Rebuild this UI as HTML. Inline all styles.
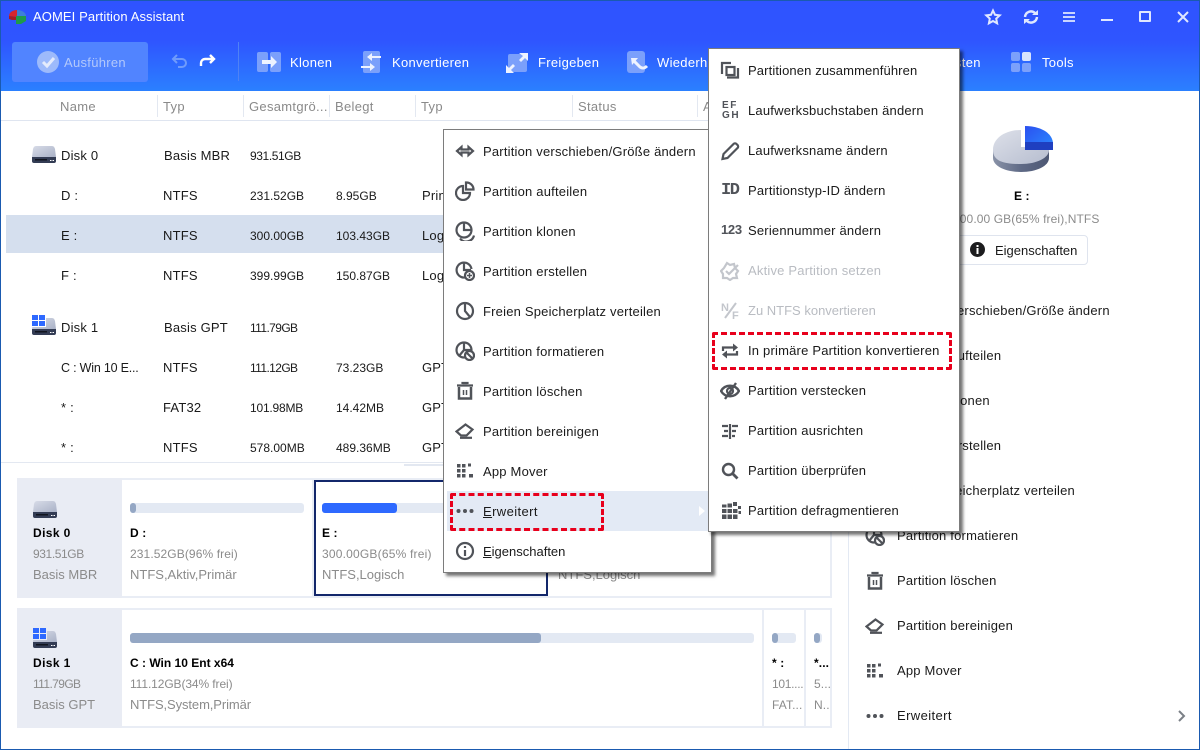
<!DOCTYPE html>
<html><head><meta charset="utf-8"><style>
*{box-sizing:border-box}
html,body{margin:0;padding:0}
body{width:1200px;height:750px;position:relative;overflow:hidden;background:#fff;font-family:"Liberation Sans",sans-serif;font-size:13px;color:#1a1a1a}
.t{position:absolute;white-space:nowrap;line-height:16px;letter-spacing:.2px}
.a{position:absolute}
.w{color:#fff;letter-spacing:.3px}
.g{color:#8b8b8b;letter-spacing:0}
.h{color:#8a8a8a;letter-spacing:.3px}
.b{font-weight:bold;color:#000;font-size:12px;letter-spacing:.1px}
.d{color:#b9bcc2}
.n{font-size:12px;letter-spacing:0}
.g.n{letter-spacing:.1px}
.menu{position:absolute;background:#fff;border:1px solid #7c7c7c;box-shadow:3px 3px 3px rgba(0,0,0,.55)}
svg{position:absolute;overflow:visible}
.i{width:20px;height:20px;fill:none;stroke:#505359;stroke-width:2.2}
.dash{position:absolute;border:3px dashed #e8001c;border-radius:2px}
u{text-decoration:underline}
</style></head><body>
<svg width="0" height="0" style="position:absolute">
<defs>
<linearGradient id="dg" x1="0" y1="0" x2="1" y2="1"><stop offset="0" stop-color="#d8dce8"/><stop offset="1" stop-color="#a9b1c6"/></linearGradient>
<linearGradient id="pg" x1="0" y1="0" x2="1" y2="1"><stop offset="0" stop-color="#dde0e9"/><stop offset="1" stop-color="#b6bdcf"/></linearGradient>
<linearGradient id="ps" x1="0" y1="0" x2="1" y2="0"><stop offset="0" stop-color="#8a93a8"/><stop offset=".5" stop-color="#5f6a86"/><stop offset="1" stop-color="#4d5773"/></linearGradient>
<linearGradient id="pb" x1="0" y1="0" x2="1" y2="1"><stop offset="0" stop-color="#2b50f0"/><stop offset="1" stop-color="#2b8bff"/></linearGradient>
<symbol id="disk" viewBox="0 0 24 17"><path d="M4 0h16c1.500 0 2.500 1 3 3l1 8H0l1-8c.5-2 1.500-3 3-3z" fill="url(#dg)"/><path d="M0 11h24v4a2 2 0 0 1-2 2H2a2 2 0 0 1-2-2z" fill="#333c54"/><path d="M3 13h12v1.500H3z" fill="#11151f"/><path d="M18 14h1.500v1H18zM20.500 14H22v1h-1.500z" fill="#fff"/></symbol>
<symbol id="win" viewBox="0 0 13 11"><path d="M0 0h6v5H0zM7 0h6v5H7zM0 6h6v5H0zM7 6h6v5H7z" fill="#2e69ff"/></symbol>
<symbol id="move" viewBox="0 0 20 20"><path d="M2 10l4.500-4v2.500h7V6l4.500 4-4.500 4v-2.500h-7V14z"/></symbol>
<symbol id="split" viewBox="0 0 20 20"><path d="M8 5a7 7 0 1 0 7 7H8z"/><path d="M11 1.500v7h7.500a7 7 0 0 0-7-7z"/></symbol>
<symbol id="clone" viewBox="0 0 20 20"><circle cx="9" cy="9" r="7.500"/><path d="M9 2v7h7.500"/><path d="M5 17.500a8 8 0 0 0 14-3"/></symbol>
<symbol id="create" viewBox="0 0 20 20"><path d="M10 16.500A7.500 7.500 0 1 1 16.500 8"/><path d="M9 1.500V9h7"/><circle cx="14.500" cy="14.500" r="4.500"/><path d="M12 14.500h5M14.500 12v5" stroke-width="1.500"/></symbol>
<symbol id="clock" viewBox="0 0 20 20"><circle cx="10" cy="10" r="8"/><path d="M10 2v8l5 6"/></symbol>
<symbol id="format" viewBox="0 0 20 20"><circle cx="9" cy="9" r="7.500"/><path d="M9 1.500V9h7.500M9 9l-5 6"/><circle cx="14.500" cy="14.500" r="4.500" fill="#fff"/><path d="M11.500 11.500l6 6"/></symbol>
<symbol id="trash" viewBox="0 0 20 20"><path d="M2 4.500h16M7.500 3V2h5v1"/><path d="M4 6v11.500h12V6" stroke-width="2.500"/><path d="M8.500 9v5M11.500 9v5" stroke-width="1.500"/></symbol>
<symbol id="erase" viewBox="0 0 20 20"><path d="M1.500 10.500L10.500 3.500l7 5-6 6H6z"/><path d="M5 16.800h12"/></symbol>
<symbol id="app" viewBox="0 0 20 20"><path stroke="none" fill="#505359" d="M1 3h3.500v3.500H1zM6 3h3.500v3.500H6zM12 2.500h3v3h-3zM1 8h3.500v3.500H1zM6 8h3.500v3.500H6zM1 13h3.500v3.500H1zM6 13h3.500v3.500H6zM13 13h4v3.500h-4z"/></symbol>
<symbol id="dots" viewBox="0 0 20 20"><g stroke="none" fill="#505359"><circle cx="3.500" cy="10" r="2"/><circle cx="10" cy="10" r="2"/><circle cx="16.500" cy="10" r="2"/></g></symbol>
<symbol id="info" viewBox="0 0 20 20"><circle cx="10" cy="10" r="8"/><path d="M10 9v6" stroke-width="2.200"/><path d="M10 5v2" stroke-width="2.200"/></symbol>
<symbol id="merge" viewBox="0 0 20 20"><path d="M11 3H2v11"/><rect x="6.500" y="7" width="8" height="8"/><path d="M18 8v9.500H7"/></symbol>
<symbol id="pen" viewBox="0 0 20 20"><path d="M2.500 18l1-5L13.500 3a2 2 0 0 1 3 0l1 1a2 2 0 0 1 0 3l-10 10z"/></symbol>
<symbol id="activ" viewBox="0 0 20 20"><path d="M7 2l3 2 4-1 1 4 3 3-2 3 1 4-4 0-3 2-3-2-4 0 0-4-2-3 3-3z" stroke="#c3c6cc"/><path d="M6 10l3 3 9-9" stroke="#c3c6cc"/></symbol>
<symbol id="conv" viewBox="0 0 20 20"><path d="M3 10V6.500h10M17 10v3.500H7"/><path d="M13 2.500l5 4-5 4zM7 9.500l-5 4 5 4z" fill="#505359" stroke="none"/></symbol>
<symbol id="eye" viewBox="0 0 20 20"><path d="M1 10c4-7 14-7 18 0-4 7-14 7-18 0z" stroke-width="2.400"/><circle cx="10" cy="10" r="3"/><path d="M16 2L5 18" stroke-width="2.400"/></symbol>
<symbol id="align" viewBox="0 0 20 20"><path d="M10 3v15"/><path d="M2 5h6M4 10h4M2 15h6M12 5h6M12 10h4M12 15h3"/></symbol>
<symbol id="search" viewBox="0 0 20 20"><circle cx="8.500" cy="8.500" r="5.500" stroke-width="2.400"/><path d="M12.500 12.500l5 5" stroke-width="2.800"/></symbol>
<symbol id="defrag" viewBox="0 0 20 20"><path stroke="none" fill="#505359" d="M1 8h4.500v4H1zM6.500 8H11v4H6.500zM12 8h4.500v4H12zM1 13.500h4.500v4.500H1zM6.500 13.500H11v4.500H6.500zM12 13.500h4.500v4.500H12zM6.500 2.500H11v4H6.500zM12 1h4v4h-4zM1 3.500h4.500v3H1zM17 5h3v3h-3zM17.500 10h2.500v3h-2.500z"/></symbol>
</defs></svg>

<!-- header -->
<div class="a" style="left:0;top:0;width:1200px;height:91px;background:linear-gradient(#2f53ff 0,#2f55ff 45%,#2b80ff 100%)"></div>
<svg style="left:8px;top:9px" width="19" height="16" viewBox="0 0 19 16"><path d="M1 7a8 6 0 0 1 8-6v7z" fill="#d8262d"/><path d="M9 1a9 6 0 0 1 9 6h-9z" fill="#3d7fd9"/><path d="M1 7l8 1v3H4l-3-1z" fill="#a51d24"/><path d="M8 7h10v5l-5 3H8z" fill="#1f9a4b"/></svg>
<div class="t w" style="left:33px;top:9px;letter-spacing:.1px">AOMEI Partition Assistant</div>
<div class="a" style="left:12px;top:42px;width:136px;height:40px;background:#5184ff;border-radius:3px"></div>
<svg style="left:37px;top:51px" width="22" height="22" viewBox="0 0 22 22"><circle cx="11" cy="11" r="11" fill="#9dbafb"/><path d="M6 11l4 4 7-8" fill="none" stroke="#e4ebfc" stroke-width="3"/></svg>
<div class="t" style="left:64px;top:55px;color:#b3c8fb;letter-spacing:.3px">Ausführen</div>
<svg style="left:172px;top:54px" width="16" height="14" viewBox="0 0 16 14" fill="none" stroke="#6f9bfb" stroke-width="2"><path d="M5 1L1 5l4 4M1 5h9a4 4 0 0 1 0 8H6"/></svg>
<svg style="left:199px;top:54px" width="16" height="14" viewBox="0 0 16 14" fill="none" stroke="#fff" stroke-width="2.400"><path d="M11 1l4 4-4 4M15 5H6a4 4 0 0 0-4 4v3"/></svg>
<div class="a" style="left:238px;top:42px;width:1px;height:39px;background:#4f82f5"></div>
<!-- klonen -->
<div class="a" style="left:257px;top:52px;width:11px;height:20px;background:#7ba0fb;border-radius:2px"></div>
<div class="a" style="left:270px;top:52px;width:11px;height:20px;background:#7ba0fb;border-radius:2px"></div>
<svg style="left:262px;top:56px" width="16" height="12" viewBox="0 0 16 12"><path d="M0 4h9V0l6 6-6 6V8H0z" fill="#eef3ff"/></svg>
<div class="t w" style="left:290px;top:55px">Klonen</div>
<!-- konvertieren -->
<div class="a" style="left:363px;top:51px;width:17px;height:22px;background:#7ba0fb;border-radius:2px"></div>
<svg style="left:361px;top:53px" width="21" height="19" viewBox="0 0 21 19"><path d="M20 3H11V0L6 4l5 4V5h9zM0 13h9v-3l5 4-5 4v-3H0z" fill="#eef3ff"/></svg>
<div class="t w" style="left:392px;top:55px">Konvertieren</div>
<!-- freigeben -->
<div class="a" style="left:508px;top:54px;width:19px;height:18px;background:#7ba0fb;border-radius:2px"></div>
<svg style="left:506px;top:53px" width="22" height="20" viewBox="0 0 22 20"><path d="M13 0h9v8l-3-3-4 4-2-2 4-4zM0 20v-8l3 3 4-4 2 2-4 4 3 3z" fill="#eef3ff"/></svg>
<div class="t w" style="left:538px;top:55px">Freigeben</div>
<!-- wieder -->
<div class="a" style="left:627px;top:51px;width:18px;height:22px;background:#7ba0fb;border-radius:3px"></div>
<svg style="left:630px;top:57px" width="18" height="14" viewBox="0 0 18 14" fill="none" stroke="#eef3ff" stroke-width="3"><path d="M3 3l7 7c3 2 5 1 7-1"/><path d="M1 1h7L2 8z" fill="#eef3ff" stroke="none"/></svg>
<div class="t w" style="left:657px;top:55px">Wiederherstellen</div>
<div class="t w" style="left:955px;top:55px">sten</div>
<!-- tools -->
<div class="a" style="left:1011px;top:52px;width:9px;height:9px;background:#7ba0fb;border-radius:2px"></div>
<div class="a" style="left:1022px;top:52px;width:9px;height:9px;background:#d9e4fd;border-radius:2px"></div>
<div class="a" style="left:1011px;top:63px;width:9px;height:9px;background:#7ba0fb;border-radius:2px"></div>
<div class="a" style="left:1022px;top:63px;width:9px;height:9px;background:#7ba0fb;border-radius:2px"></div>
<div class="t w" style="left:1042px;top:55px">Tools</div>
<!-- window controls -->
<svg style="left:985px;top:9px" width="16" height="16" viewBox="0 0 16 16" fill="none" stroke="#dfe7ff" stroke-width="2"><path d="M8 1.500l2 4.300 4.700.6-3.500 3.200.9 4.700L8 12l-4.100 2.300.9-4.700L1.300 6.400 6 5.800z"/></svg>
<svg style="left:1023px;top:9px" width="16" height="16" viewBox="0 0 16 16" fill="none" stroke="#dfe7ff" stroke-width="2.400"><path d="M2 8a6 6 0 0 1 10-4M14 8a6 6 0 0 1-10 4"/><path d="M9 6h6V1zM7 10H1v5z" fill="#dfe7ff" stroke="none"/></svg>
<svg style="left:1063px;top:12px" width="12" height="10" viewBox="0 0 12 10" stroke="#dfe7ff" stroke-width="1.800"><path d="M0 1h12M0 5h12M0 9h12"/></svg>
<div class="a" style="left:1101px;top:19px;width:12px;height:2px;background:#dfe7ff"></div>
<div class="a" style="left:1139px;top:11px;width:12px;height:11px;border:2px solid #dfe7ff;border-radius:1px"></div>
<svg style="left:1178px;top:12px" width="10" height="10" viewBox="0 0 10 10" stroke="#dfe7ff" stroke-width="2"><path d="M0 0l10 10M10 0L0 10"/></svg>

<!-- table header -->
<div class="a" style="left:0;top:120px;width:848px;height:1px;background:#dfe5f0"></div>
<div class="a" style="left:157px;top:95px;width:1px;height:22px;background:#e3e8f1"></div>
<div class="a" style="left:243px;top:95px;width:1px;height:22px;background:#e3e8f1"></div>
<div class="a" style="left:329px;top:95px;width:1px;height:22px;background:#e3e8f1"></div>
<div class="a" style="left:415px;top:95px;width:1px;height:22px;background:#e3e8f1"></div>
<div class="a" style="left:572px;top:95px;width:1px;height:22px;background:#e3e8f1"></div>
<div class="a" style="left:697px;top:95px;width:1px;height:22px;background:#e3e8f1"></div>
<div class="t h" style="left:60px;top:99px">Name</div>
<div class="t h" style="left:163px;top:99px">Typ</div>
<div class="t h" style="left:249px;top:99px">Gesamtgrö...</div>
<div class="t h" style="left:335px;top:99px">Belegt</div>
<div class="t h" style="left:421px;top:99px">Typ</div>
<div class="t h" style="left:578px;top:99px">Status</div>
<div class="t h" style="left:703px;top:99px">A</div>

<!-- table rows -->
<div class="a" style="left:6px;top:215px;width:842px;height:38px;background:#d5dfee"></div>
<svg style="left:32px;top:146px" width="24" height="17"><use href="#disk"/></svg>
<div class="t" style="left:61px;top:148px">Disk 0</div><div class="t" style="left:164px;top:148px">Basis MBR</div><div class="t n" style="left:250px;top:148px;letter-spacing:-.4px">931.51GB</div>
<div class="t" style="left:61px;top:188px">D :</div><div class="t" style="left:163px;top:188px">NTFS</div><div class="t n" style="left:250px;top:188px">231.52GB</div><div class="t n" style="left:336px;top:188px">8.95GB</div><div class="t" style="left:422px;top:188px">Primär</div>
<div class="t" style="left:61px;top:228px">E :</div><div class="t" style="left:163px;top:228px">NTFS</div><div class="t n" style="left:250px;top:228px">300.00GB</div><div class="t n" style="left:336px;top:228px">103.43GB</div><div class="t" style="left:422px;top:228px">Logisch</div>
<div class="t" style="left:61px;top:268px">F :</div><div class="t" style="left:163px;top:268px">NTFS</div><div class="t n" style="left:250px;top:268px">399.99GB</div><div class="t n" style="left:336px;top:268px">150.87GB</div><div class="t" style="left:422px;top:268px">Logisch</div>
<svg style="left:32px;top:318px" width="24" height="17"><use href="#disk"/></svg>
<div class="a" style="left:31px;top:314px;width:15px;height:13px;background:#fff"></div>
<svg style="left:32px;top:315px" width="13" height="11"><use href="#win"/></svg>
<div class="t" style="left:61px;top:320px">Disk 1</div><div class="t" style="left:164px;top:320px">Basis GPT</div><div class="t n" style="left:250px;top:320px;letter-spacing:-.6px">111.79GB</div>
<div class="t" style="left:61px;top:360px;font-size:12.500px;letter-spacing:-.2px">C : Win 10 E...</div><div class="t" style="left:163px;top:360px">NTFS</div><div class="t n" style="left:250px;top:360px;letter-spacing:-.6px">111.12GB</div><div class="t n" style="left:336px;top:360px">73.23GB</div><div class="t" style="left:422px;top:360px">GPT</div>
<div class="t" style="left:61px;top:400px">* :</div><div class="t" style="left:163px;top:400px">FAT32</div><div class="t n" style="left:250px;top:400px;letter-spacing:-.2px">101.98MB</div><div class="t n" style="left:336px;top:400px">14.42MB</div><div class="t" style="left:422px;top:400px">GPT</div>
<div class="t" style="left:61px;top:440px">* :</div><div class="t" style="left:163px;top:440px">NTFS</div><div class="t n" style="left:250px;top:440px">578.00MB</div><div class="t n" style="left:336px;top:440px">489.36MB</div><div class="t" style="left:422px;top:440px">GPT</div>
<div class="a" style="left:0;top:462px;width:848px;height:1px;background:#e3e8f1"></div>
<div class="a" style="left:404px;top:464px;width:120px;height:2px;background:#e3e8f1"></div>

<!-- disk map 0 -->
<div class="a" style="left:17px;top:478px;width:815px;height:120px;border:2px solid #e9edf5"></div>
<div class="a" style="left:17px;top:478px;width:105px;height:120px;background:#e9ecf4"></div>
<svg style="left:33px;top:501px" width="24" height="17"><use href="#disk"/></svg>
<div class="t b" style="left:33px;top:525px;letter-spacing:.4px">Disk 0</div>
<div class="t g n" style="left:33px;top:546px;letter-spacing:-.4px">931.51GB</div>
<div class="t g" style="left:33px;top:567px">Basis MBR</div>
<div class="a" style="left:312px;top:480px;width:2px;height:116px;background:#e9edf5"></div>
<div class="a" style="left:130px;top:503px;width:174px;height:10px;background:#e3e9f3;border-radius:3px"></div>
<div class="a" style="left:130px;top:503px;width:6px;height:10px;background:#94a7c4;border-radius:3px"></div>
<div class="t b" style="left:130px;top:525px">D :</div>
<div class="t g n" style="left:130px;top:546px">231.52GB(96% frei)</div>
<div class="t g" style="left:130px;top:567px">NTFS,Aktiv,Primär</div>
<div class="a" style="left:314px;top:480px;width:234px;height:116px;border:2px solid #13276b"></div>
<div class="a" style="left:322px;top:503px;width:174px;height:10px;background:#e3e9f3;border-radius:3px"></div>
<div class="a" style="left:322px;top:503px;width:75px;height:10px;background:#2e69ff;border-radius:3px"></div>
<div class="t b" style="left:322px;top:525px">E :</div>
<div class="t g n" style="left:322px;top:546px;letter-spacing:.2px">300.00GB(65% frei)</div>
<div class="t g" style="left:322px;top:567px">NTFS,Logisch</div>
<div class="t g" style="left:558px;top:567px">NTFS,Logisch</div>

<!-- disk map 1 -->
<div class="a" style="left:17px;top:608px;width:815px;height:120px;border:2px solid #e9edf5"></div>
<div class="a" style="left:17px;top:608px;width:105px;height:120px;background:#e9ecf4"></div>
<svg style="left:33px;top:631px" width="24" height="17"><use href="#disk"/></svg>
<div class="a" style="left:32px;top:627px;width:15px;height:13px;background:#e9ecf4"></div>
<svg style="left:33px;top:628px" width="13" height="11"><use href="#win"/></svg>
<div class="t b" style="left:33px;top:655px;letter-spacing:.4px">Disk 1</div>
<div class="t g n" style="left:33px;top:676px;letter-spacing:-.6px">111.79GB</div>
<div class="t g" style="left:33px;top:697px">Basis GPT</div>
<div class="a" style="left:130px;top:633px;width:624px;height:10px;background:#e3e9f3;border-radius:3px"></div>
<div class="a" style="left:130px;top:633px;width:411px;height:10px;background:#94a7c4;border-radius:3px"></div>
<div class="t b" style="left:130px;top:655px;letter-spacing:0">C : Win 10 Ent x64</div>
<div class="t g n" style="left:130px;top:676px;letter-spacing:-.1px">111.12GB(34% frei)</div>
<div class="t g" style="left:130px;top:697px;letter-spacing:-.1px">NTFS,System,Primär</div>
<div class="a" style="left:762px;top:610px;width:2px;height:116px;background:#e9edf5"></div>
<div class="a" style="left:804px;top:610px;width:2px;height:116px;background:#e9edf5"></div>
<div class="a" style="left:772px;top:633px;width:24px;height:10px;background:#e3e9f3;border-radius:3px"></div>
<div class="a" style="left:772px;top:633px;width:6px;height:10px;background:#94a7c4;border-radius:3px"></div>
<div class="a" style="left:814px;top:633px;width:8px;height:10px;background:#e3e9f3;border-radius:3px"></div>
<div class="a" style="left:814px;top:633px;width:6px;height:10px;background:#94a7c4;border-radius:3px"></div>
<div class="t b" style="left:772px;top:655px">* :</div>
<div class="t g n" style="left:772px;top:676px;letter-spacing:-.3px">101....</div>
<div class="t g n" style="left:772px;top:697px">FAT...</div>
<div class="t b" style="left:814px;top:655px">*...</div>
<div class="t g n" style="left:814px;top:676px">5...</div>
<div class="t g n" style="left:814px;top:697px">N..</div>

<!-- right panel -->
<div class="a" style="left:848px;top:91px;width:1px;height:659px;background:#e3e9f3"></div>
<svg style="left:993px;top:126px" width="60" height="48" viewBox="0 0 60 48">
<path d="M0 24v8c0 8 12.500 14 28 14s28-6 28-14v-8z" fill="url(#ps)"/>
<path d="M28 4C12.500 4 0 12 0 24s12.500 14 28 14 28-6 28-14v-3H28z" fill="url(#pg)"/>
<path d="M32 0c14 0 27 6 28 17v7H32z" fill="url(#pb)"/>
<path d="M32 16h28v8H32z" fill="#1f3fc0"/></svg>
<div class="t b" style="left:1014px;top:188px">E :</div>
<div class="t g n" style="left:953px;top:211px">300.00 GB(65% frei),NTFS</div>
<div class="a" style="left:950px;top:235px;width:138px;height:30px;border:1px solid #dfe4ee;border-radius:4px;background:#fff"></div>
<svg style="left:970px;top:242px" width="15" height="15" viewBox="0 0 15 15"><circle cx="7.500" cy="7.500" r="7.500" fill="#1c1c1e"/><path d="M6.500 6h2v6h-2zM6.500 3h2v2h-2z" fill="#fff"/></svg>
<div class="t" style="left:995px;top:243px;letter-spacing:0">Eigenschaften</div>
<div class="t" style="left:897px;top:303px">Partition verschieben/Größe ändern</div>
<div class="t" style="left:897px;top:348px">Partition aufteilen</div>
<div class="t" style="left:897px;top:393px">Partition klonen</div>
<div class="t" style="left:897px;top:438px">Partition erstellen</div>
<div class="t" style="left:897px;top:483px">Freien Speicherplatz verteilen</div>
<svg class="i" style="left:865px;top:526px"><use href="#format"/></svg>
<div class="t" style="left:897px;top:528px">Partition formatieren</div>
<svg class="i" style="left:865px;top:571px"><use href="#trash"/></svg>
<div class="t" style="left:897px;top:573px">Partition löschen</div>
<svg class="i" style="left:865px;top:616px"><use href="#erase"/></svg>
<div class="t" style="left:897px;top:618px">Partition bereinigen</div>
<svg class="i" style="left:866px;top:661px"><use href="#app"/></svg>
<div class="t" style="left:897px;top:663px">App Mover</div>
<svg class="i" style="left:865px;top:706px"><use href="#dots"/></svg>
<div class="t" style="left:897px;top:708px;letter-spacing:.4px">Erweitert</div>
<svg style="left:1178px;top:710px" width="8" height="12" viewBox="0 0 8 12" fill="none" stroke="#7b8087" stroke-width="2"><path d="M1 1l5 5-5 5"/></svg>

<!-- menu 1 -->
<div class="menu" style="left:443px;top:129px;width:269px;height:444px"></div>
<div class="a" style="left:447px;top:491px;width:261px;height:40px;background:#e3eaf5"></div>
<svg style="left:699px;top:506px" width="6" height="10" viewBox="0 0 6 10"><path d="M0 0l6 5-6 5z" fill="#fff"/></svg>
<svg class="i" style="left:455px;top:141px"><use href="#move"/></svg><div class="t" style="left:483px;top:144px">Partition verschieben/Größe ändern</div>
<svg class="i" style="left:455px;top:181px"><use href="#split"/></svg><div class="t" style="left:483px;top:184px">Partition aufteilen</div>
<svg class="i" style="left:455px;top:221px"><use href="#clone"/></svg><div class="t" style="left:483px;top:224px">Partition klonen</div>
<svg class="i" style="left:455px;top:261px"><use href="#create"/></svg><div class="t" style="left:483px;top:264px">Partition erstellen</div>
<svg class="i" style="left:455px;top:301px"><use href="#clock"/></svg><div class="t" style="left:483px;top:304px">Freien Speicherplatz verteilen</div>
<svg class="i" style="left:455px;top:341px"><use href="#format"/></svg><div class="t" style="left:483px;top:344px">Partition formatieren</div>
<svg class="i" style="left:455px;top:381px"><use href="#trash"/></svg><div class="t" style="left:483px;top:384px">Partition löschen</div>
<svg class="i" style="left:455px;top:421px"><use href="#erase"/></svg><div class="t" style="left:483px;top:424px">Partition bereinigen</div>
<svg class="i" style="left:456px;top:461px"><use href="#app"/></svg><div class="t" style="left:483px;top:464px">App Mover</div>
<svg class="i" style="left:455px;top:501px"><use href="#dots"/></svg><div class="t" style="left:483px;top:504px;letter-spacing:.4px"><u>E</u>rweitert</div>
<svg class="i" style="left:455px;top:541px"><use href="#info"/></svg><div class="t" style="left:483px;top:544px;letter-spacing:0"><u>E</u>igenschaften</div>
<div class="dash" style="left:450px;top:493px;width:154px;height:38px"></div>

<!-- menu 2 -->
<div class="menu" style="left:708px;top:48px;width:252px;height:484px"></div>
<svg class="i" style="left:720px;top:60px"><use href="#merge"/></svg><div class="t" style="left:748px;top:63px;letter-spacing:.12px">Partitionen zusammenführen</div>
<div class="a" style="left:722px;top:101px;font:bold 10px/10px 'Liberation Sans',sans-serif;color:#505359;letter-spacing:1.600px;white-space:nowrap">EF<br>GH</div>
<div class="t" style="left:748px;top:103px">Laufwerksbuchstaben ändern</div>
<svg class="i" style="left:720px;top:141px"><use href="#pen"/></svg><div class="t" style="left:748px;top:143px">Laufwerksname ändern</div>
<div class="a" style="left:721px;top:181px;font:bold 17px/19px 'Liberation Mono',monospace;color:#505359;letter-spacing:-1.500px">ID</div>
<div class="t" style="left:748px;top:183px">Partitionstyp-ID ändern</div>
<div class="a" style="left:721px;top:222px;font:bold 13px/16px 'Liberation Sans',sans-serif;color:#505359;letter-spacing:-.3px">123</div>
<div class="t" style="left:748px;top:223px">Seriennummer ändern</div>
<svg class="i" style="left:720px;top:261px"><use href="#activ"/></svg><div class="t d" style="left:748px;top:263px">Aktive Partition setzen</div>
<svg style="left:721px;top:301px" width="20" height="20" viewBox="0 0 20 20"><path d="M15 2L4 17" stroke="#c3c6cc" stroke-width="2"/><text x="0" y="10" font-size="11" font-weight="bold" fill="#c3c6cc" font-family="Liberation Sans">N</text><text x="11" y="18" font-size="11" font-weight="bold" fill="#c3c6cc" font-family="Liberation Sans">F</text></svg>
<div class="t d" style="left:748px;top:303px;letter-spacing:0">Zu NTFS konvertieren</div>
<svg class="i" style="left:720px;top:341px"><use href="#conv"/></svg><div class="t" style="left:748px;top:343px">In primäre Partition konvertieren</div>
<svg class="i" style="left:720px;top:381px"><use href="#eye"/></svg><div class="t" style="left:748px;top:383px">Partition verstecken</div>
<svg class="i" style="left:720px;top:421px"><use href="#align"/></svg><div class="t" style="left:748px;top:423px">Partition ausrichten</div>
<svg class="i" style="left:720px;top:461px"><use href="#search"/></svg><div class="t" style="left:748px;top:463px">Partition überprüfen</div>
<svg class="i" style="left:721px;top:501px"><use href="#defrag"/></svg><div class="t" style="left:748px;top:503px">Partition defragmentieren</div>
<div class="dash" style="left:712px;top:332px;width:240px;height:38px"></div>

<!-- window border -->
<div class="a" style="left:0;top:0;width:1200px;height:750px;border:1px solid #1a5ab0;pointer-events:none"></div>
</body></html>
